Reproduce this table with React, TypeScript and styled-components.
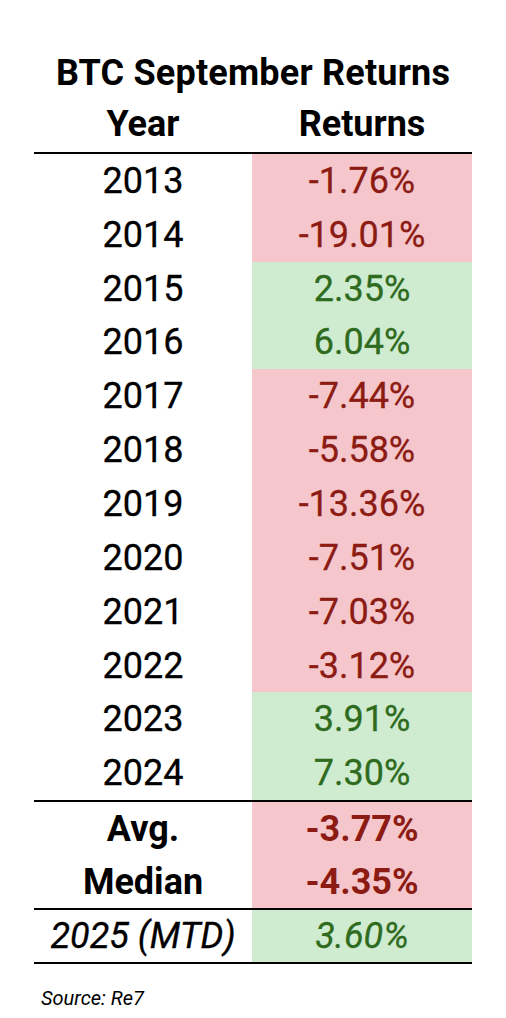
import React from 'react';
import styled, { createGlobalStyle } from 'styled-components';

type Tone = 'neg' | 'pos';

type Row = {
  label: string;
  value: string;
  tone: Tone;
};

const yearly: Row[] = [
  { label: '2013', value: '-1.76%', tone: 'neg' },
  { label: '2014', value: '-19.01%', tone: 'neg' },
  { label: '2015', value: '2.35%', tone: 'pos' },
  { label: '2016', value: '6.04%', tone: 'pos' },
  { label: '2017', value: '-7.44%', tone: 'neg' },
  { label: '2018', value: '-5.58%', tone: 'neg' },
  { label: '2019', value: '-13.36%', tone: 'neg' },
  { label: '2020', value: '-7.51%', tone: 'neg' },
  { label: '2021', value: '-7.03%', tone: 'neg' },
  { label: '2022', value: '-3.12%', tone: 'neg' },
  { label: '2023', value: '3.91%', tone: 'pos' },
  { label: '2024', value: '7.30%', tone: 'pos' },
];

const summary: Row[] = [
  { label: 'Avg.', value: '-3.77%', tone: 'neg' },
  { label: 'Median', value: '-4.35%', tone: 'neg' },
];

const GlobalStyle = createGlobalStyle`
  html, body {
    margin: 0;
    padding: 0;
    background: #ffffff;
  }
  body {
    font-family: Roboto, "Liberation Sans", Arial, sans-serif;
    color: #000000;
  }
`;

const Page = styled.div`
  width: 506px;
  height: 1018px;
  box-sizing: border-box;
  padding: 46px 34px 0 34px;
`;

const Title = styled.div`
  width: 438px;
  height: 54px;
  display: flex;
  align-items: center;
  justify-content: center;
  font-size: 36px;
  font-weight: 700;
  letter-spacing: 0.2px;
`;

const Grid = styled.div`
  display: grid;
  grid-template-columns: 218px 220px;
`;

const Section = styled(Grid)<{ $rowHeight: number }>`
  grid-auto-rows: ${(p) => p.$rowHeight}px;
  border-bottom: 2px solid #000000;
`;

const HeaderRow = styled(Grid)`
  height: 52px;
  border-bottom: 2px solid #000000;
`;

const HeadCell = styled.div`
  display: flex;
  align-items: center;
  justify-content: center;
  font-size: 36px;
  font-weight: 700;
  padding-bottom: 4px;
`;

const LabelCell = styled.div<{ $bold?: boolean; $italic?: boolean }>`
  display: flex;
  align-items: center;
  justify-content: center;
  font-size: 36px;
  font-weight: ${(p) => (p.$bold ? 700 : 400)};
  font-style: ${(p) => (p.$italic ? 'italic' : 'normal')};
  -webkit-text-stroke: ${(p) => (p.$bold ? '0' : '0.3px')};
`;

const ValueCell = styled(LabelCell)<{ $tone: Tone }>`
  background: ${(p) => (p.$tone === 'neg' ? '#f5c7cc' : '#cfebd0')};
  color: ${(p) => (p.$tone === 'neg' ? '#8c1b13' : '#2f6b1e')};
`;

const Source = styled.div`
  margin: 22px 0 0 7px;
  font-size: 20px;
  font-style: italic;
`;

const Rows = ({ rows, bold }: { rows: Row[]; bold?: boolean }) => (
  <>
    {rows.map((r) => (
      <React.Fragment key={r.label}>
        <LabelCell $bold={bold}>{r.label}</LabelCell>
        <ValueCell $bold={bold} $tone={r.tone}>
          {r.value}
        </ValueCell>
      </React.Fragment>
    ))}
  </>
);

export default function App() {
  return (
    <>
      <GlobalStyle />
      <Page>
        <Title>BTC September Returns</Title>
        <HeaderRow>
          <HeadCell>Year</HeadCell>
          <HeadCell>Returns</HeadCell>
        </HeaderRow>
        <Section $rowHeight={53.85}>
          <Rows rows={yearly} />
        </Section>
        <Section $rowHeight={53}>
          <Rows rows={summary} bold />
        </Section>
        <Section $rowHeight={52}>
          <LabelCell $italic>2025 (MTD)</LabelCell>
          <ValueCell $italic $tone="pos">
            3.60%
          </ValueCell>
        </Section>
        <Source>Source: Re7</Source>
      </Page>
    </>
  );
}
